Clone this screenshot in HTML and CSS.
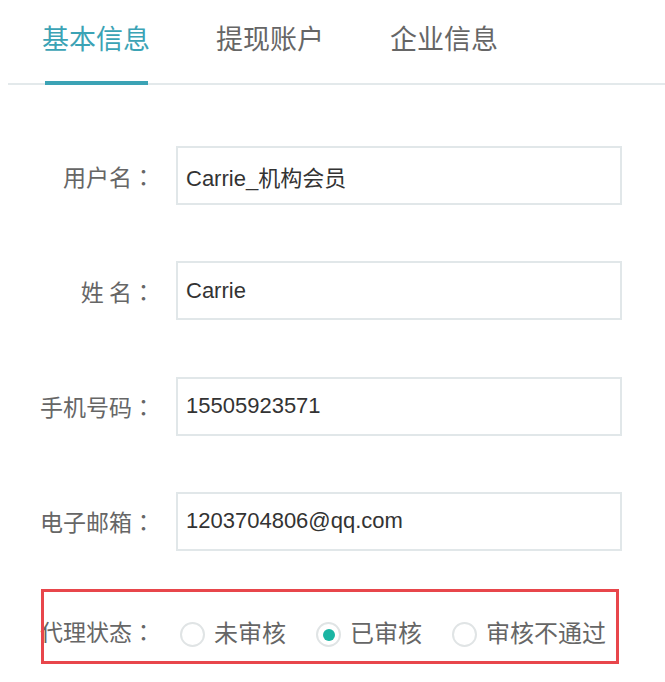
FILE: index.html
```html
<!DOCTYPE html>
<html lang="zh-CN">
<head>
<meta charset="utf-8">
<title>基本信息</title>
<link rel="stylesheet" href="styles.css">
</head>
<body>
<div class="tabbar">
  <div class="tab active">基本信息</div>
  <div class="tab">提现账户</div>
  <div class="tab">企业信息</div>
</div>
<form class="form">
  <div class="row">
    <label class="label">用户名<span class="colon" lang="ja">：</span></label>
    <div class="input">Carrie_机构会员</div>
  </div>
  <div class="row">
    <label class="label">姓 名<span class="colon" lang="ja">：</span></label>
    <div class="input">Carrie</div>
  </div>
  <div class="row">
    <label class="label">手机号码<span class="colon" lang="ja">：</span></label>
    <div class="input">15505923571</div>
  </div>
  <div class="row">
    <label class="label">电子邮箱<span class="colon" lang="ja">：</span></label>
    <div class="input">1203704806@qq.com</div>
  </div>
  <div class="row radio-row">
    <span class="label">代理状态<span class="colon" lang="ja">：</span></span>
    <div class="radios">
      <span class="radio"><span class="circle"></span>未审核</span>
      <span class="radio"><span class="circle checked"></span>已审核</span>
      <span class="radio"><span class="circle"></span>审核不通过</span>
    </div>
    <div class="highlight"></div>
  </div>
</form>
</body>
</html>
```
FILE: styles.css
```css
html, body {
  margin: 0;
  padding: 0;
  background: #fff;
}
body {
  font-family: "Liberation Sans", "Noto Sans CJK SC", sans-serif;
  width: 665px;
}
.tabbar {
  margin-left: 8px;
  display: flex;
  gap: 66px;
  padding: 24px 0 0 34px;
  height: 59px;
  border-bottom: 2px solid #e3e9eb;
}
.tab {
  position: relative;
  font-family: "Noto Sans CJK SC", sans-serif;
  font-size: 27px;
  line-height: 27px;
  color: #666;
  height: 27px;
}
.tab.active {
  color: #3ba3b5;
}
.tab.active::after {
  content: "";
  position: absolute;
  left: 3px;
  right: 2px;
  top: 57px;
  height: 4px;
  background: #3ba3b5;
}
.form {
  padding-top: 61px;
  display: flex;
  flex-direction: column;
  gap: 56.3px;
}
.row {
  display: flex;
  align-items: center;
  height: 59px;
}
.label {
  width: 155px;
  text-align: right;
  font-family: "Noto Sans CJK SC", sans-serif;
  font-size: 23px;
  color: #666;
  white-space: pre;
  flex: none;
}
.colon {
  font-family: "Noto Sans CJK JP", sans-serif;
}
.input {
  margin-left: 21px;
  box-sizing: border-box;
  width: 446px;
  height: 59px;
  border: 2px solid #e1e7e9;
  padding-left: 8px;
  display: flex;
  align-items: center;
  font-size: 22px;
  color: #333;
}
.radio-row {
  position: relative;
  margin-top: -18px;
  height: 75px;
  box-sizing: border-box;
  padding-top: 9px;
  align-items: center;
}
.radios {
  display: flex;
  align-items: center;
  margin-left: 25px;
  gap: 30px;
}
.radio {
  display: flex;
  align-items: center;
  gap: 9px;
  font-family: "Noto Sans CJK SC", sans-serif;
  font-size: 24px;
  color: #666;
}
.circle {
  box-sizing: border-box;
  width: 25px;
  height: 25px;
  border: 2px solid #e0e4e5;
  border-radius: 50%;
  display: flex;
  align-items: center;
  justify-content: center;
  margin-top: 7px;
}
.circle.checked::before {
  content: "";
  width: 12px;
  height: 12px;
  border-radius: 50%;
  background: #1ab5a3;
}
.highlight {
  position: absolute;
  left: 41px;
  top: 0;
  width: 578px;
  height: 75px;
  box-sizing: border-box;
  border: 3px solid #e8464b;
}
```
